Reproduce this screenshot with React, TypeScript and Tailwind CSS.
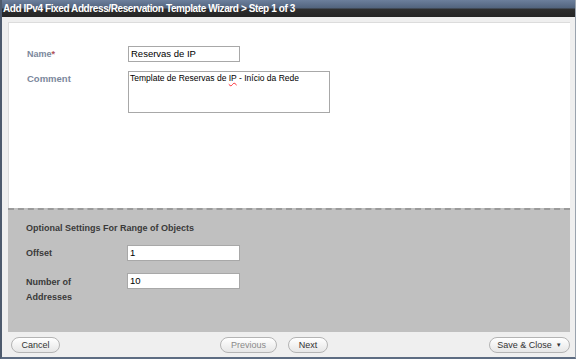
import React from "react";

const font = { fontFamily: '"Liberation Sans", Arial, sans-serif' };

function Btn({ children, className = "", disabled = false }: { children: React.ReactNode; className?: string; disabled?: boolean }) {
  return (
    <button
      className={
        "h-[16px] shrink-0 rounded-full border border-[#b4b4b4] bg-[linear-gradient(to_bottom,#ffffff,#e6e6e6)] text-[9px] leading-[14px] flex items-center justify-center " +
        (disabled ? "text-[#8a8a8a] " : "text-[#333] ") +
        className
      }
    >
      {children}
    </button>
  );
}

export default function App() {
  return (
    <div style={font} className="w-[576px] h-[359px] flex flex-col bg-[#efefef] overflow-hidden border-l-2 border-[#4d5a6d] border-b-2 border-b-[#5d6c82] border-r border-r-[#9aa3ae]">
      <div className="h-[17px] shrink-0 bg-[linear-gradient(to_bottom,#6c7f9c_0%,#53657f_45%,#2e2e2e_55%,#252525_100%)] text-white font-bold text-[10px] leading-[17px] pl-[1px] tracking-[-0.4px] whitespace-nowrap">
        Add IPv4 Fixed Address/Reservation Template Wizard &gt; Step 1 of 3
      </div>
      <div className="flex-1 flex flex-col pl-[6px] pr-[5px] pt-[5px]">
        <div className="h-[186px] shrink-0 bg-white border-l border-t border-[#dcdcdc] pl-[18px] pt-[23px] flex flex-col gap-[9px]">
          <div className="flex items-start">
            <div className="w-[101px] text-[9px] font-bold text-[#7b879c] pt-[2px]">
              Name<span className="text-[#b0505a]">*</span>
            </div>
            <div className="w-[112px] h-[16px] border border-[#a8a8a8] text-[9.5px] leading-[14px] pl-[2px] text-black">Reservas de IP</div>
          </div>
          <div className="flex items-start">
            <div className="w-[101px] text-[9.5px] font-bold text-[#7b879c] pt-[1px]">Comment</div>
            <div className="w-[202px] h-[42px] border border-[#a8a8a8] text-[8.5px] leading-[12px] pl-[1px] text-black">
              Template de Reservas de <span className="underline decoration-wavy decoration-red-500">IP</span> - Início da Rede
            </div>
          </div>
        </div>
        <div className="h-[124px] shrink-0 bg-[#c0c0c0] border-t-2 border-dashed border-[#9a9a9a] pl-[18px] pt-[12px] text-[#3a3a3a] text-[9px] font-bold flex flex-col">
          <div>Optional Settings For Range of Objects</div>
          <div className="flex items-start mt-[9px]">
            <div className="w-[101px] pt-[2px]">Offset</div>
            <div className="w-[113px] h-[16px] bg-white border border-[#a8a8a8] text-[9.5px] font-normal leading-[14px] pl-[2px] text-black">1</div>
          </div>
          <div className="flex items-start mt-[12px]">
            <div className="w-[101px] pt-[2px] leading-[15px]">Number of<br />Addresses</div>
            <div className="w-[113px] h-[16px] bg-white border border-[#a8a8a8] text-[9.5px] font-normal leading-[14px] pl-[2px] text-black">10</div>
          </div>
        </div>
        <div className="flex-1 flex items-center pl-[3px] pt-[1px]">
          <Btn className="w-[49px]">Cancel</Btn>
          <Btn className="w-[57px] ml-[160px]" disabled>Previous</Btn>
          <Btn className="w-[40px] ml-[11px]">Next</Btn>
          <div className="flex-1" />
          <Btn className="w-[81px] gap-[4px]">
            Save &amp; Close <span className="text-[6px]">▼</span>
          </Btn>
        </div>
      </div>
    </div>
  );
}
